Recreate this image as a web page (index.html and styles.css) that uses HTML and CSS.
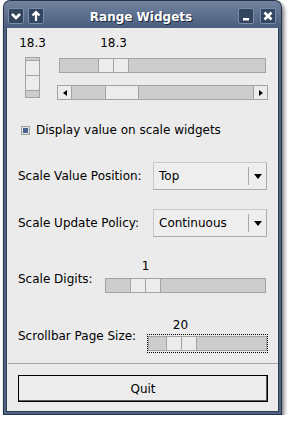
FILE: index.html
```html
<!DOCTYPE html>
<html lang="en">
<head>
  <meta charset="UTF-8">
  <title>Range Widgets</title>
  <link rel="stylesheet" href="styles.css">
</head>
<body>

<div class="window">
  <div class="titlebar">
    <div class="tb-group">
      <span class="tb-btn"><svg width="14" height="14" viewBox="0 0 14 14"><polyline points="3,5 7,9 11,5" fill="none" stroke="#fff" stroke-width="2.6"/></svg></span>
      <span class="tb-btn"><svg width="14" height="14" viewBox="0 0 14 14"><path d="M7 12V3M3.5 6.5L7 3l3.5 3.5" fill="none" stroke="#fff" stroke-width="2.2"/></svg></span>
    </div>
    <div class="title">Range Widgets</div>
    <div class="tb-group tb-right">
      <span class="tb-btn"><svg width="14" height="14" viewBox="0 0 14 14"><rect x="4" y="9" width="6" height="2.5" fill="#fff"/></svg></span>
      <span class="tb-btn"><svg width="14" height="14" viewBox="0 0 14 14"><path d="M3.5 3.5l7 7M10.5 3.5l-7 7" stroke="#fff" stroke-width="2.6"/></svg></span>
    </div>
  </div>

  <div class="frame">
    <div class="content">

      <div class="top">
        <div class="vscale">
          <div class="value">18.3</div>
          <div class="vtrough">
            <div class="vslider" style="margin-top:2px"><span></span><span></span></div>
          </div>
        </div>
        <div class="hgroup">
          <div class="value hvalue" style="margin-left:41px">18.3</div>
          <div class="trough main-trough">
            <div class="slider" style="margin-left:38px"><span></span><span></span></div>
          </div>
          <div class="scrollbar">
            <div class="arrow arrow-left"><i></i></div>
            <div class="thumb" style="margin-left:33px"></div>
            <div class="arrow arrow-right"><i></i></div>
          </div>
        </div>
      </div>

      <div class="check-row">
        <span class="checkbox"><span></span></span>
        <span>Display value on scale widgets</span>
      </div>

      <div class="combo-row first">
        <span>Scale Value Position:</span>
        <div class="combo"><span class="combo-text">Top</span><span class="combo-btn"><i></i></span></div>
      </div>

      <div class="combo-row">
        <span>Scale Update Policy:</span>
        <div class="combo"><span class="combo-text">Continuous</span><span class="combo-btn"><i></i></span></div>
      </div>

      <div class="scale-row digits-row">
        <span class="row-label">Scale Digits:</span>
        <div class="scale-group digits">
          <div class="value hvalue" style="margin-left:25px">1</div>
          <div class="trough">
            <div class="slider" style="margin-left:24px"><span></span><span></span></div>
          </div>
        </div>
      </div>

      <div class="scale-row page-row">
        <span class="row-label">Scrollbar Page Size:</span>
        <div class="scale-group page">
          <div class="value hvalue" style="margin-left:18px">20</div>
          <div class="focus">
            <div class="trough">
              <div class="slider" style="margin-left:17px"><span></span><span></span></div>
            </div>
          </div>
        </div>
      </div>

      <div class="separator"></div>

      <div class="quit">Quit</div>

    </div>
  </div>
</div>

</body>
</html>
```

FILE: styles.css
```css
body {
  margin: 0;
  background: #fff;
  font-family: "DejaVu Sans", sans-serif;
  font-size: 12px;
  line-height: 14px;
  color: #000;
}

* {
  box-sizing: border-box;
}

.window {
  width: 279px;
  margin-left: 3px;
  box-shadow: 2px 3px 4px rgba(0, 0, 0, 0.55);
  border-radius: 7px 7px 0 0;
}

/* title bar */
.titlebar {
  height: 28px;
  display: flex;
  align-items: flex-start;
  padding: 7px 5px 0 4px;
  border: 1px solid #27344b;
  border-bottom: none;
  border-radius: 7px 7px 0 0;
  background: linear-gradient(#71839f, #4a5d7c);
}

.tb-group {
  display: flex;
  gap: 4px;
}

.tb-right {
  gap: 6px;
}

.tb-btn {
  width: 16px;
  height: 16px;
  display: flex;
  align-items: center;
  justify-content: center;
  background: #34455f;
  border: 1px solid #7b8daa;
  border-radius: 2px;
}

.title {
  flex: 1;
  text-align: center;
  color: #fff;
  font-weight: bold;
  padding-top: 2px;
  text-shadow: 1px 1px 0 #1e293d;
}

/* window frame */
.frame {
  border: 1px solid #27344b;
  border-top: none;
  padding: 0 2px 2px;
  background: #50637f;
}

.content {
  background: #ebebeb;
  border: 1px solid #2f3c55;
  border-top: none;
  padding: 0 10px 9px 11px;
}

/* scales */
.top {
  display: flex;
  padding-top: 8px;
}

.vscale {
  width: 29px;
  display: flex;
  flex-direction: column;
  align-items: center;
}

.value {
  height: 14px;
  white-space: nowrap;
}

.hvalue {
  width: 31px;
  text-align: center;
}

.vtrough {
  width: 15px;
  height: 41px;
  margin-top: 7px;
  border: 1px solid #a3a3a3;
  background: #cdcdcd;
}

.vslider {
  border-top: 1px solid #a3a3a3;
}

.vslider span {
  display: block;
  height: 15px;
  background: #ececec;
  border-bottom: 1px solid #a3a3a3;
}

.hgroup {
  width: 211px;
  margin-left: 10px;
}

.trough {
  height: 15px;
  display: flex;
  border: 1px solid #a3a3a3;
  background: #cdcdcd;
}

.main-trough {
  margin: 8px 2px 0;
}

.slider {
  display: flex;
  border-left: 1px solid #a3a3a3;
}

.slider span {
  width: 15px;
  background: #ececec;
  border-right: 1px solid #a3a3a3;
}

.scrollbar {
  height: 15px;
  margin-top: 12px;
  display: flex;
  border: 1px solid #a3a3a3;
  background: #cdcdcd;
}

.arrow {
  width: 14px;
  display: flex;
  align-items: center;
  justify-content: center;
  background: #ececec;
}

.arrow-left {
  border-right: 1px solid #a3a3a3;
}

.arrow-right {
  margin-left: auto;
  border-left: 1px solid #a3a3a3;
}

.arrow i {
  width: 0;
  height: 0;
  border-top: 3px solid transparent;
  border-bottom: 3px solid transparent;
}

.arrow-left i {
  border-right: 4px solid #000;
}

.arrow-right i {
  border-left: 4px solid #000;
}

.thumb {
  width: 34px;
  background: #ececec;
  border-left: 1px solid #a3a3a3;
  border-right: 1px solid #a3a3a3;
}

/* checkbox */
.check-row {
  display: flex;
  align-items: center;
  margin-top: 23px;
  padding-left: 3px;
}

.checkbox {
  width: 9px;
  height: 9px;
  margin-right: 6px;
  border: 1px solid #9c9c9c;
  background: #e4e4e4;
  display: flex;
  align-items: center;
  justify-content: center;
}

.checkbox span {
  width: 5px;
  height: 5px;
  background: #4a6491;
}

/* combo boxes */
.combo-row {
  display: flex;
  align-items: center;
  justify-content: space-between;
  margin-top: 19px;
}

.combo-row.first {
  margin-top: 25px;
}

.combo {
  width: 114px;
  height: 28px;
  margin-right: 1px;
  display: flex;
  align-items: center;
  background: #eeeeee;
  border: 1px solid #c8c8c8;
  border-right-color: #aaaaaa;
  border-bottom-color: #aaaaaa;
}

.combo-text {
  flex: 1;
  padding-left: 5px;
}

.combo-btn {
  width: 18px;
  height: 18px;
  display: flex;
  align-items: center;
  justify-content: center;
  border-left: 1px solid #a8a8a8;
}

.combo-btn i {
  width: 0;
  height: 0;
  border-left: 4px solid transparent;
  border-right: 4px solid transparent;
  border-top: 5px solid #000;
}

/* scale rows */
.scale-row {
  display: flex;
  align-items: flex-end;
  justify-content: space-between;
}

.digits-row {
  margin-top: 22px;
}

.digits-row .row-label {
  margin-bottom: 7px;
}

.digits {
  width: 161px;
  margin-right: 2px;
}

.digits .trough {
  margin-top: 5px;
}

.page-row {
  margin-top: 25px;
}

.page-row .row-label {
  margin-bottom: 10px;
}

.page {
  width: 121px;
}

.focus {
  margin-top: 2px;
  padding: 1px 0;
  border: 1px dotted #000;
}

.separator {
  height: 1px;
  margin: 10px -10px 0 -10px;
  background: #a5a5a5;
}

.quit {
  height: 27px;
  margin-top: 11px;
  display: flex;
  align-items: center;
  justify-content: center;
  background: #ececec;
  border: 1px solid #000;
  box-shadow: inset -1px -1px 0 #5a5a5a;
}
```
